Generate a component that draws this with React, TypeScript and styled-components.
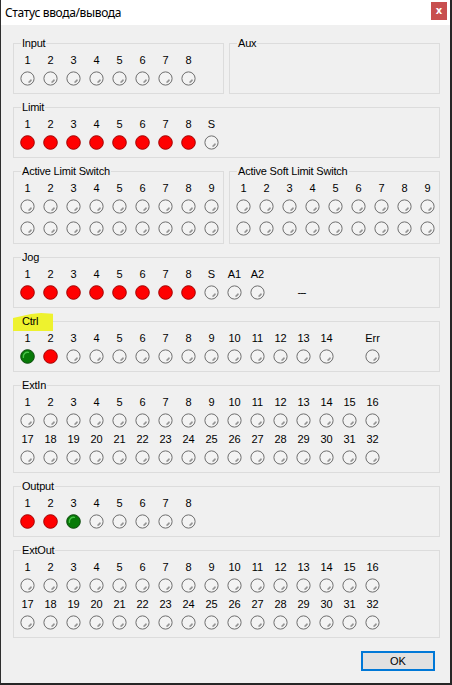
import React from 'react';
import styled, { createGlobalStyle } from 'styled-components';

type LedState = 'off' | 'red' | 'green';
type LedCell = LedState | { text: string } | null;

type Row =
  | { kind: 'labels'; cells: (string | null)[] }
  | { kind: 'leds'; cells: LedCell[] };

interface Group {
  title: string;
  cols: number;
  rows: Row[];
  marked?: boolean;
}

const nums = (from: number, to: number) =>
  Array.from({ length: to - from + 1 }, (_, i) => String(from + i));
const many = (n: number, s: LedState): LedState[] => Array(n).fill(s);

const GlobalStyle = createGlobalStyle`
  html, body {
    margin: 0;
    padding: 0;
    background: #f0f0f0;
  }
  body {
    font-family: "Liberation Sans", Arial, sans-serif;
    font-size: 11px;
    color: #000;
  }
`;

const Window = styled.div`
  width: 452px;
  height: 685px;
  box-sizing: border-box;
  display: flex;
  flex-direction: column;
  background: #f0f0f0;
  border-left: 1px solid #2e2e2e;
  border-right: 2px solid #262626;
  border-bottom: 2px solid #262626;
`;

const TitleBar = styled.div`
  height: 25px;
  flex-shrink: 0;
  display: flex;
  align-items: center;
  padding-left: 4px;
  background: #fff;
`;

const Title = styled.span`
  font-family: "Noto Sans", "Open Sans", sans-serif;
  font-size: 12px;
  color: #000;
  letter-spacing: -0.35px;
`;

const CloseButton = styled.div`
  margin-left: auto;
  margin-right: 3px;
  align-self: flex-start;
  margin-top: 2px;
  width: 16px;
  height: 18px;
  background: #c84f4f;
  color: #fff;
  display: flex;
  align-items: center;
  justify-content: center;
  font-family: "DejaVu Sans", sans-serif;
  font-size: 10px;
  font-weight: bold;
  line-height: 1;
`;

const Client = styled.div`
  flex: 1;
  display: flex;
  flex-direction: column;
  gap: 13px;
  padding: 18px 10px 13px 12px;
`;

const Pair = styled.div`
  display: grid;
  grid-template-columns: 211px 211px;
  gap: 5px;
  flex-shrink: 0;
`;

const Box = styled.div`
  position: relative;
  flex-shrink: 0;
  border: 1px solid #dcdcdc;
  padding: 10px 0 7px 2px;
`;

const Caption = styled.span`
  position: absolute;
  top: -7px;
  left: 7px;
  padding: 0 1px;
  background: #f0f0f0;
  line-height: 13px;
  letter-spacing: -0.2px;
  white-space: nowrap;
`;

const CaptionText = styled.span`
  position: relative;
`;

const Marker = styled.span`
  position: absolute;
  left: -8px;
  top: -2px;
  width: 40px;
  height: 18px;
  background: #eef22e;
  clip-path: polygon(0 28%, 45% 6%, 70% 0, 100% 4%, 100% 100%, 0 100%);
`;

const GridRow = styled.div<{ $cols: number; $h: number; $gap: number }>`
  display: grid;
  grid-template-columns: repeat(${(p) => p.$cols}, 23px);
  height: ${(p) => p.$h}px;
  margin-top: ${(p) => p.$gap}px;
  justify-items: center;
  align-items: center;
`;

const Label = styled.span`
  line-height: 13px;
  white-space: nowrap;
`;

const Dashes = styled.span`
  line-height: 13px;
  letter-spacing: -1px;
  margin-left: -4px;
`;

const Led = ({ state }: { state: LedState }) => (
  <svg width="15" height="15" viewBox="0 0 15 15">
    {state === 'off' && (
      <>
        <circle cx="7.5" cy="7.5" r="6.6" fill="#f3f3f3" stroke="#6f6f6f" strokeWidth="1" />
        <path
          d="M11 9.2 A4.2 4.2 0 0 1 9.2 11"
          stroke="#969696"
          strokeWidth="1.8"
          fill="none"
          strokeLinecap="round"
        />
      </>
    )}
    {state === 'red' && (
      <circle cx="7.5" cy="7.5" r="6.8" fill="#ff0000" stroke="#a30000" strokeWidth="1" />
    )}
    {state === 'green' && (
      <>
        <circle cx="7.5" cy="7.5" r="6.8" fill="#077a07" stroke="#0b4a0b" strokeWidth="1" />
        <path
          d="M3.4 8.4 A4.3 4.3 0 0 1 8.4 3.4"
          stroke="#47c447"
          strokeWidth="1.4"
          fill="none"
          strokeLinecap="round"
        />
      </>
    )}
  </svg>
);

const gapFor = (prev: Row | undefined, cur: Row) => {
  if (!prev) return 0;
  if (cur.kind === 'labels') return 5;
  return prev.kind === 'labels' ? 4 : 7;
};

const GroupBox = ({ group }: { group: Group }) => (
  <Box>
    <Caption>
      {group.marked && <Marker />}
      <CaptionText>{group.title}</CaptionText>
    </Caption>
    {group.rows.map((row, i) => (
      <GridRow
        key={i}
        $cols={group.cols}
        $h={row.kind === 'labels' ? 13 : 15}
        $gap={gapFor(group.rows[i - 1], row)}
      >
        {row.kind === 'labels'
          ? row.cells.map((c, j) => <Label key={j}>{c ?? ''}</Label>)
          : row.cells.map((c, j) =>
              c === null ? (
                <span key={j} />
              ) : typeof c === 'string' ? (
                <Led key={j} state={c} />
              ) : (
                <Dashes key={j}>{c.text}</Dashes>
              )
            )}
      </GridRow>
    ))}
  </Box>
);

const Footer = styled.div`
  margin-top: auto;
  display: flex;
  justify-content: flex-end;
  padding-right: 5px;
  flex-shrink: 0;
`;

const OkButton = styled.button`
  width: 74px;
  height: 20px;
  box-sizing: border-box;
  border: 2px solid #0078d7;
  background: #e1e1e1;
  font-family: "Liberation Sans", Arial, sans-serif;
  font-size: 11px;
  color: #000;
  padding: 0;
`;

const input: Group = {
  title: 'Input',
  cols: 8,
  rows: [
    { kind: 'labels', cells: nums(1, 8) },
    { kind: 'leds', cells: many(8, 'off') },
  ],
};

const aux: Group = { title: 'Aux', cols: 1, rows: [] };

const groups: Group[] = [
  {
    title: 'Limit',
    cols: 9,
    rows: [
      { kind: 'labels', cells: [...nums(1, 8), 'S'] },
      { kind: 'leds', cells: [...many(8, 'red'), 'off'] },
    ],
  },
];

const switchGroup = (title: string): Group => ({
  title,
  cols: 9,
  rows: [
    { kind: 'labels', cells: nums(1, 9) },
    { kind: 'leds', cells: many(9, 'off') },
    { kind: 'leds', cells: many(9, 'off') },
  ],
});

const lower: Group[] = [
  {
    title: 'Jog',
    cols: 13,
    rows: [
      { kind: 'labels', cells: [...nums(1, 8), 'S', 'A1', 'A2'] },
      { kind: 'leds', cells: [...many(8, 'red'), 'off', 'off', 'off', null, { text: '---' }] },
    ],
  },
  {
    title: 'Ctrl',
    cols: 16,
    marked: true,
    rows: [
      { kind: 'labels', cells: [...nums(1, 14), null, 'Err'] },
      { kind: 'leds', cells: ['green', 'red', ...many(12, 'off'), null, 'off'] },
    ],
  },
  {
    title: 'ExtIn',
    cols: 16,
    rows: [
      { kind: 'labels', cells: nums(1, 16) },
      { kind: 'leds', cells: many(16, 'off') },
      { kind: 'labels', cells: nums(17, 32) },
      { kind: 'leds', cells: many(16, 'off') },
    ],
  },
  {
    title: 'Output',
    cols: 8,
    rows: [
      { kind: 'labels', cells: nums(1, 8) },
      { kind: 'leds', cells: ['red', 'red', 'green', ...many(5, 'off')] },
    ],
  },
  {
    title: 'ExtOut',
    cols: 16,
    rows: [
      { kind: 'labels', cells: nums(1, 16) },
      { kind: 'leds', cells: many(16, 'off') },
      { kind: 'labels', cells: nums(17, 32) },
      { kind: 'leds', cells: many(16, 'off') },
    ],
  },
];

export default function App() {
  return (
    <>
      <GlobalStyle />
      <Window>
        <TitleBar>
          <Title>Статус ввода/вывода</Title>
          <CloseButton>x</CloseButton>
        </TitleBar>
        <Client>
          <Pair>
            <GroupBox group={input} />
            <GroupBox group={aux} />
          </Pair>
          {groups.map((g) => (
            <GroupBox key={g.title} group={g} />
          ))}
          <Pair>
            <GroupBox group={switchGroup('Active Limit Switch')} />
            <GroupBox group={switchGroup('Active Soft Limit Switch')} />
          </Pair>
          {lower.map((g) => (
            <GroupBox key={g.title} group={g} />
          ))}
          <Footer>
            <OkButton>OK</OkButton>
          </Footer>
        </Client>
      </Window>
    </>
  );
}
